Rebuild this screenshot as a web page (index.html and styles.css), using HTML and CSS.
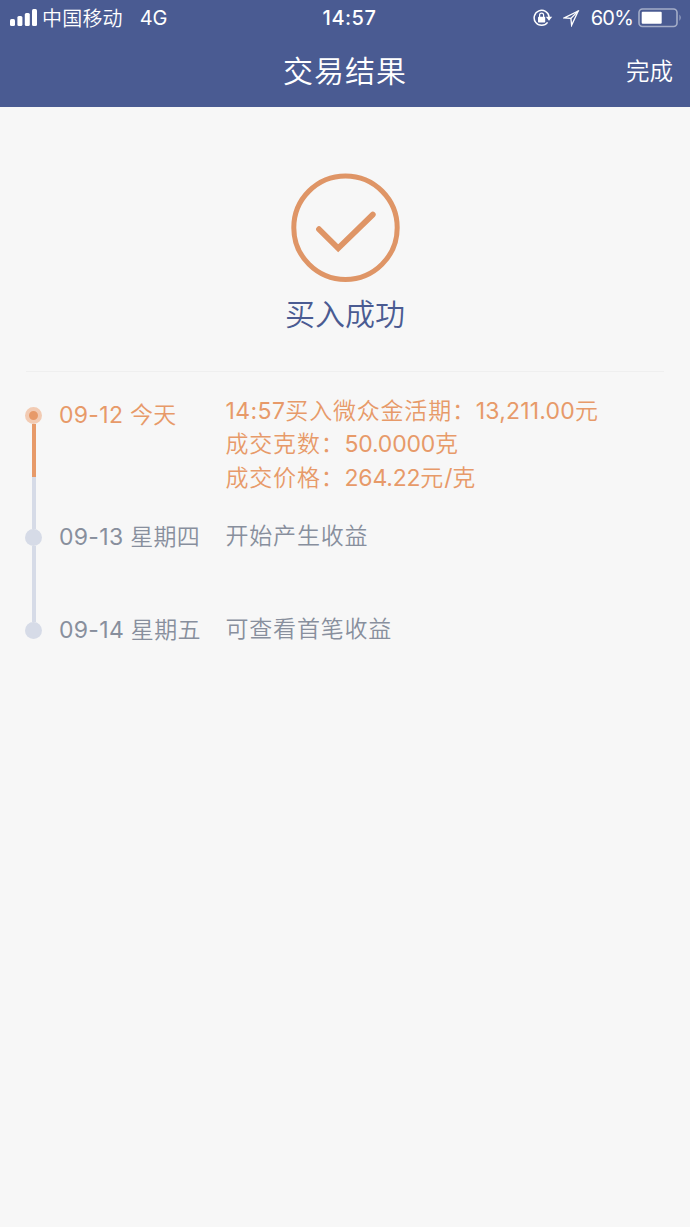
FILE: index.html
```
<!DOCTYPE html>
<html lang="zh-CN">
<head>
    <meta charset="UTF-8">
    <meta name="viewport" content="width=device-width, initial-scale=1.0">
    <title>交易结果</title>
    <link rel="stylesheet" href="styles.css">
</head>
<body>
    <header class="header">
        <div class="status-bar">
            <div class="status-left">
                <svg class="signal" width="28" height="18" viewBox="0 0 28 18" fill="#fff">
                    <rect x="0" y="10" width="5" height="7" rx="1.5"/>
                    <rect x="7.4" y="7" width="5" height="10" rx="1.5"/>
                    <rect x="14.8" y="4" width="5" height="13" rx="1.5"/>
                    <rect x="22" y="0" width="5" height="17" rx="1.5"/>
                </svg>
                <span class="carrier">中国移动</span>
                <span class="network">4G</span>
            </div>
            <div class="clock">14:57</div>
            <div class="status-right">
                <svg class="lock" width="20" height="18" viewBox="0 0 20 18" fill="none" stroke="#fff" stroke-width="1.5">
                    <path d="M14.6 13.4A7.5 7.5 0 1 1 16.1 8"/>
                    <path d="M12.8 7.8h6.4l-3.2 4z" fill="#fff" stroke="none"/>
                    <rect x="5" y="7.8" width="7.2" height="5.6" rx=".6" fill="#fff" stroke="none"/>
                    <path d="M6.6 8.2V6.1a2 2 0 0 1 4 0v2.1" stroke-width="1.2"/>
                </svg>
                <svg class="location" width="17" height="17" viewBox="0 0 17 17" fill="none" stroke="#fff" stroke-width="1.3">
                    <path d="M15.2 1L1.2 7.9l6.7.5.7 6.9z"/>
                    <path d="M15.2 1L7.9 8.4"/>
                </svg>
                <span class="percent">60%</span>
                <svg class="battery" width="45" height="20" viewBox="0 0 45 20">
                    <rect x="1" y="1" width="38" height="17.5" rx="3.5" fill="none" stroke="#a4adc8" stroke-width="1.6"/>
                    <rect x="3.7" y="3.7" width="20" height="12" rx="1" fill="#fff"/>
                    <path d="M41.5 6.5q2.4 3.2 0 6.5z" fill="#a4adc8"/>
                </svg>
            </div>
        </div>
        <div class="nav-bar">
            <h1 class="title">交易结果</h1>
            <a class="done">完成</a>
        </div>
    </header>

    <main class="content">
        <section class="result">
            <svg class="check" width="110" height="110" viewBox="0 0 110 110" fill="none" stroke="#df9566">
                <circle cx="55.5" cy="54.7" r="51.7" stroke-width="5"/>
                <path d="M29 56.2L48.2 75.3L82.8 41.6" stroke-width="5.8" stroke-linecap="round"/>
            </svg>
            <p class="result-text">买入成功</p>
        </section>

        <ol class="timeline">
            <li class="step step-active">
                <div class="marker">
                    <span class="dot"></span>
                    <span class="rail"></span>
                </div>
                <div class="date"><span class="day">09-12</span> 今天</div>
                <div class="detail">
                    <p><span class="time">14:57</span>买入微众金活期：<span class="amount">13,211.00</span>元</p>
                    <p>成交克数：<span class="number">50.0000</span>克</p>
                    <p>成交价格：<span class="number">264.22</span>元<span class="number">/</span>克</p>
                </div>
            </li>
            <li class="step step-next">
                <div class="marker">
                    <span class="dot"></span>
                    <span class="rail"></span>
                </div>
                <div class="date"><span class="day">09-13</span> 星期四</div>
                <div class="detail"><p>开始产生收益</p></div>
            </li>
            <li class="step">
                <div class="marker">
                    <span class="dot"></span>
                </div>
                <div class="date"><span class="day">09-14</span> 星期五</div>
                <div class="detail"><p>可查看首笔收益</p></div>
            </li>
        </ol>
    </main>
</body>
</html>
```

FILE: styles.css
```
* {
    box-sizing: border-box;
    margin: 0;
    padding: 0;
}

body {
    min-height: 100vh;
    background-color: #f7f7f7;
    font-family: "Inter", "Noto Sans CJK SC", sans-serif;
    font-weight: 350;
}

.header {
    height: 107px;
    background-color: #4a5b92;
    color: #fff;
}

.status-bar {
    display: grid;
    grid-template-columns: 1fr auto 1fr;
    align-items: center;
    height: 36px;
    padding: 0 7px 0 10px;
    font-size: 20px;
    line-height: 34px;
}

.status-left,
.status-right {
    display: flex;
    align-items: center;
    height: 34px;
}

.status-right {
    justify-content: flex-end;
}

.carrier {
    margin-left: 4px;
    padding-top: 2px;
    letter-spacing: 0.2px;
}

.network {
    margin-left: 17px;
    font-weight: 400;
    letter-spacing: -0.3px;
}

.clock {
    padding-left: 6px;
    font-weight: 500;
    letter-spacing: 0.5px;
}

.location {
    margin-left: 10px;
}

.percent {
    margin-left: 11px;
    font-weight: 400;
    letter-spacing: -0.8px;
}

.battery {
    margin-left: 5px;
}

.nav-bar {
    display: grid;
    grid-template-columns: 1fr auto 1fr;
    align-items: center;
    height: 69px;
    padding: 0 17px;
}

.title {
    grid-column: 2;
    font-size: 30px;
    font-weight: 350;
    line-height: 68px;
    letter-spacing: 1px;
}

.done {
    justify-self: end;
    padding-top: 2px;
    font-size: 23.5px;
    line-height: 68px;
}

.result {
    display: flex;
    flex-direction: column;
    align-items: center;
    height: 265px;
    margin: 0 26px;
    padding-top: 66px;
    border-bottom: 1px solid #efefef;
}

.result-text {
    margin-top: 9px;
    color: #4a5b92;
    font-size: 30px;
    line-height: 44px;
}

.timeline {
    padding: 35px 25px 0;
    list-style: none;
}

.step {
    display: flex;
    min-height: 17px;
    color: #888f9d;
    font-size: 23px;
}

.step-active {
    height: 122px;
    color: #e79a69;
}

.step-next {
    height: 93px;
}

.marker {
    display: flex;
    flex-direction: column;
    align-items: center;
    width: 17px;
}

.dot {
    width: 17px;
    height: 17px;
    border-radius: 50%;
    background-color: #d6dbe7;
}

.rail {
    flex: 1;
    width: 4px;
    margin-left: 1px;
    background-color: #d6dbe7;
}

.step-active .dot {
    border: 4.5px solid #f2cbb3;
    background-color: #e79a69;
}

.step-active .rail {
    background: linear-gradient(#e79a69 53px, #d6dbe7 53px);
}

.date {
    width: 166.5px;
    margin-left: 17px;
    line-height: 17px;
    letter-spacing: 0.3px;
    white-space: nowrap;
}

.day {
    font-weight: 400;
}

.detail {
    margin-top: -9px;
    line-height: 33.3px;
    letter-spacing: 0.8px;
    white-space: nowrap;
}

.step-active .detail {
    margin-top: -12px;
}

.time {
    font-weight: 400;
    letter-spacing: 0.4px;
}

.amount {
    font-weight: 400;
    letter-spacing: 0.2px;
}

.number {
    font-weight: 400;
    letter-spacing: -0.2px;
}
```
